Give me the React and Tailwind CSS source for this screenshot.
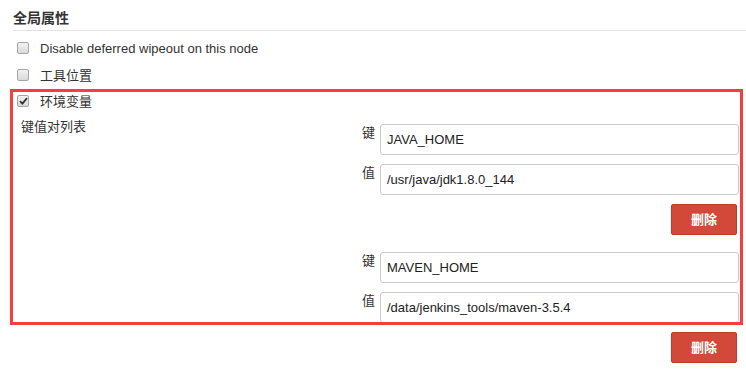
// Jenkins node properties — global env vars section
const FONT = "font-['Liberation_Sans','Noto_Sans_CJK_SC',sans-serif]";

const ENV_VARS = [
  { key: 'JAVA_HOME', value: '/usr/java/jdk1.8.0_144' },
  { key: 'MAVEN_HOME', value: '/data/jenkins_tools/maven-3.5.4' },
];

function Checkbox({ checked }) {
  return (
    <span className="w-[12px] h-[12px] shrink-0 rounded-[2px] border border-[#a6a6a6] bg-gradient-to-b from-[#f2f2f2] to-[#dadada] flex items-center justify-center">
      {checked && (
        <svg width="9" height="8" viewBox="0 0 9 8">
          <path d="M1 4.2 L3.4 6.6 L8 1.2" fill="none" stroke="#333" strokeWidth="1.8" />
        </svg>
      )}
    </span>
  );
}

function CheckRow({ label, checked, className }) {
  return (
    <div className={`h-[26px] flex items-center pl-[17px] gap-[11px] ${className || ''}`}>
      <Checkbox checked={checked} />
      <span className="leading-[16px] pt-[2px]">{label}</span>
    </div>
  );
}

function Field({ label, value }) {
  return (
    <div className="flex">
      <span className="w-[18px] pt-[1px] leading-[16px]">{label}</span>
      <div className="flex-1 h-[31px] border border-[#cccccc] rounded-[3px] px-[6px] flex items-center text-[13px] text-[#222]">
        {value}
      </div>
    </div>
  );
}

export default function App() {
  return (
    <div className={`relative w-[746px] h-[371px] bg-white text-[13px] text-[#333] overflow-hidden ${FONT}`}>
      <div className="ml-[13px] h-[31px] border-b border-[#e5e5e5]">
        <h3 className="pt-[9px] text-[14px] leading-[18px] font-bold text-[#333]">全局属性</h3>
      </div>

      <CheckRow label="Disable deferred wipeout on this node" className="mt-[4px]" />
      <CheckRow label="工具位置" className="mt-[1px]" />
      <CheckRow label="环境变量" checked />

      <div className="flex">
        <div className="w-[362px] pl-[21px] pt-[5px] leading-[16px]">键值对列表</div>
        <div className="flex-1 pt-[10px] pr-[7px] flex flex-col">
          {ENV_VARS.map((v, i) => (
            <div key={v.key} className={`flex flex-col gap-[9px] ${i > 0 ? 'mt-[17px]' : ''}`}>
              <Field label="键" value={v.key} />
              <Field label="值" value={v.value} />
              <div className="flex justify-end pr-[2px]">
                <button className="w-[66px] h-[31px] rounded-[2px] bg-[#d24939] border border-[#c0392b] text-white font-bold text-[13px]">
                  删除
                </button>
              </div>
            </div>
          ))}
        </div>
      </div>

      {/* annotation frame drawn over the env var block */}
      <div className="absolute left-[10px] top-[89px] w-[733px] h-[236px] border-[3px] border-[#fb3c3c] pointer-events-none" />
    </div>
  );
}
